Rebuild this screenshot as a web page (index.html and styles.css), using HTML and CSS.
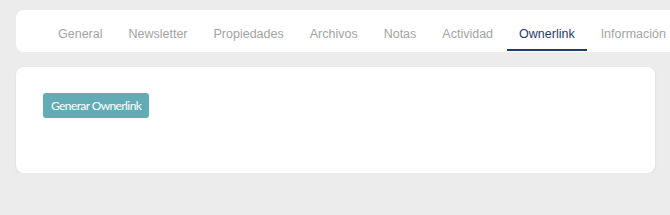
FILE: index.html
```html
<!DOCTYPE html>
<html>
<head>
    <title>Ownerlink</title>
    <link rel="stylesheet" href="styles.css">
</head>
<body>
    <div class="page">
        <nav class="tabs">
            <a class="tab" href="#">General</a>
            <a class="tab" href="#">Newsletter</a>
            <a class="tab" href="#">Propiedades</a>
            <a class="tab" href="#">Archivos</a>
            <a class="tab" href="#">Notas</a>
            <a class="tab" href="#">Actividad</a>
            <a class="tab active" href="#">Ownerlink</a>
            <a class="tab" href="#">Información</a>
        </nav>

        <div class="panel">
            <button class="btn-primary">Generar Ownerlink</button>
        </div>
    </div>
</body>
</html>
```

FILE: styles.css
```css
body {
    margin: 0;
    background-color: #ececec;
    overflow: hidden;
}

.page {
    padding: 10px 15px 0 16px;
}

.tabs {
    display: flex;
    gap: 2px;
    width: max-content;
    background-color: white;
    border-radius: 8px;
    padding: 0 30px 1px 30px;
    font-family: "Liberation Sans", Arial, sans-serif;
    font-size: 12.5px;
}

.tab {
    display: block;
    padding: 17px 12px 7px 12px;
    line-height: 15px;
    color: #a3a3a3;
    text-decoration: none;
    border-bottom: 2px solid transparent;
}

.tab.active {
    color: #1f3c6e;
    border-bottom-color: #1f3c6e;
}

.panel {
    margin-top: 15px;
    background-color: white;
    border-radius: 8px;
    padding: 26px 27px 55px 27px;
    box-shadow: 0 1px 3px rgba(0,0,0,0.08);
}

.btn-primary {
    display: block;
    height: 25px;
    padding: 0 8px;
    border: none;
    border-radius: 3px;
    background-color: #62adb5;
    color: white;
    font-family: Lato, sans-serif;
    font-size: 12px;
    letter-spacing: -0.6px;
}
```
